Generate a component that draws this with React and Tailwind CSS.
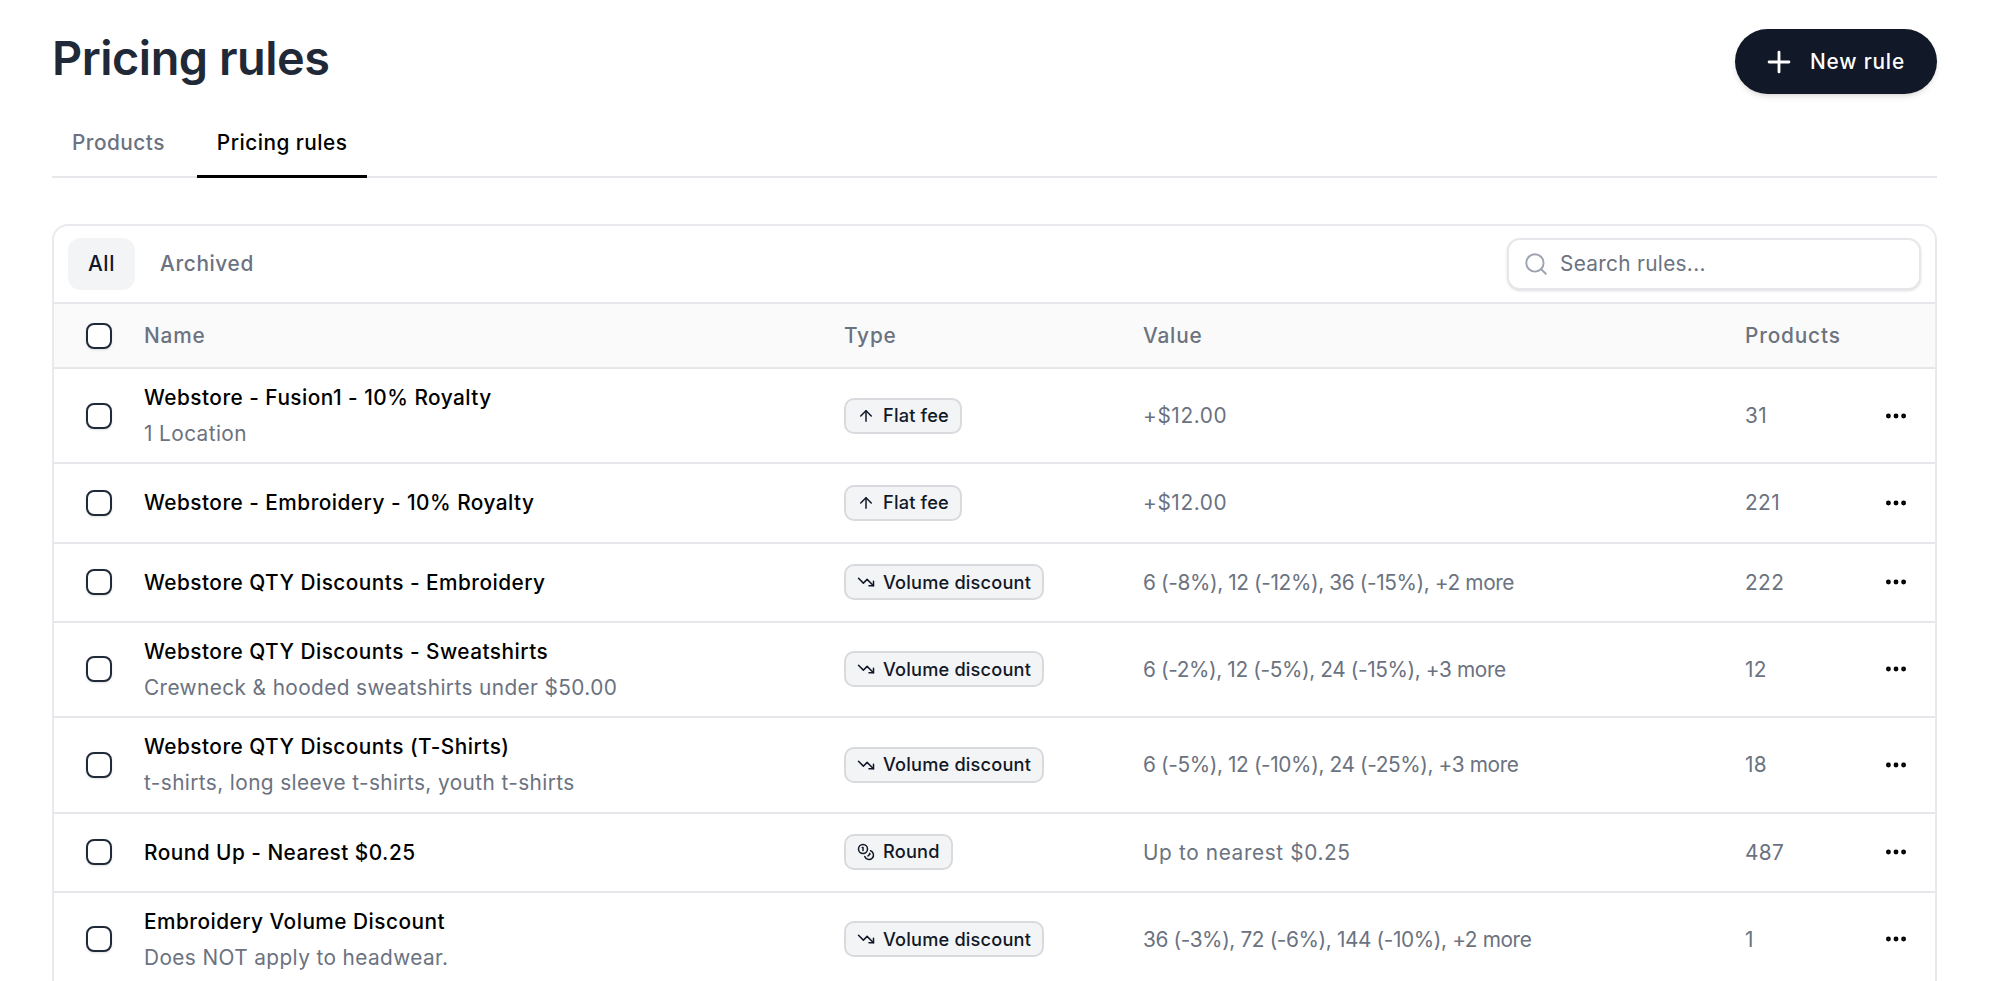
import React from "react";
import { ArrowUp, Coins, Ellipsis, Plus, Search, TrendingDown } from "lucide-react";

const rules = [
  { name: "Webstore - Fusion1 - 10% Royalty", sub: "1 Location", type: "flat", value: "+$12.00", products: "31" },
  { name: "Webstore - Embroidery - 10% Royalty", type: "flat", value: "+$12.00", products: "221" },
  { name: "Webstore QTY Discounts - Embroidery", type: "volume", value: "6 (-8%), 12 (-12%), 36 (-15%), +2 more", products: "222" },
  { name: "Webstore QTY Discounts - Sweatshirts", sub: "Crewneck & hooded sweatshirts under $50.00", type: "volume", value: "6 (-2%), 12 (-5%), 24 (-15%), +3 more", products: "12" },
  { name: "Webstore QTY Discounts (T-Shirts)", sub: "t-shirts, long sleeve t-shirts, youth t-shirts", type: "volume", value: "6 (-5%), 12 (-10%), 24 (-25%), +3 more", products: "18" },
  { name: "Round Up - Nearest $0.25", type: "round", value: "Up to nearest $0.25", products: "487" },
  { name: "Embroidery Volume Discount", sub: "Does NOT apply to headwear.", type: "volume", value: "36 (-3%), 72 (-6%), 144 (-10%), +2 more", products: "1" },
];

const badges = {
  flat: { label: "Flat fee", Icon: ArrowUp },
  volume: { label: "Volume discount", Icon: TrendingDown },
  round: { label: "Round", Icon: Coins },
};

const Checkbox = () => (
  <div className="w-[26px] h-[26px] rounded-[8px] border-2 border-[#1f2937] bg-white shadow-sm" />
);

const Badge = ({ type }) => {
  const { label, Icon } = badges[type];
  return (
    <span className="inline-flex items-center gap-[8px] h-[36px] pl-[11px] pr-[11px] rounded-[10px] border-2 border-[#d8dade] bg-[#f3f4f6] text-[18.2px] tracking-[0.01em] font-medium text-[#111827]">
      <Icon className="w-[18px] h-[18px]" strokeWidth={2} />
      {label}
    </span>
  );
};

export default function App() {
  return (
    <div className="h-[981px] overflow-hidden bg-white pl-[52px] pr-[63px] pt-[29px] tracking-[0.025em] font-['Inter',sans-serif]">
      <div className="flex items-start justify-between">
        <h1 className="text-[46.8px] leading-[58px] font-semibold tracking-[-0.01em] text-[#1f2937]">Pricing rules</h1>
        <button className="flex items-center gap-[14px] h-[65px] pl-[27px] pr-[32px] rounded-full bg-[#111827] text-white text-[20.8px] tracking-[0.04em] font-medium shadow-md">
          <Plus className="w-[34px] h-[34px]" strokeWidth={2} />
          New rule
        </button>
      </div>

      {/* Tabs */}
      <div className="mt-[14px] flex border-b-2 border-[#e5e7eb] h-[70px] tracking-[0.03em]">
        <div className="flex items-center pt-[2px] px-[20px] text-[20.8px] font-medium text-[#6b7280]">Products</div>
        <div className="ml-[12px] flex items-center pt-[2px] px-[20px] h-[70px] border-b-[3px] border-black text-[20.8px] font-medium text-black">Pricing rules</div>
      </div>

      {/* Card */}
      <div className="mt-[46px] rounded-t-[16px] border-2 border-[#e9eaee] border-b-0">
        <div className="flex items-center justify-between h-[78px] pl-[14px] pr-[14px] border-b-2 border-[#e5e7eb]">
          <div className="flex items-center gap-[5px] text-[20.8px] font-medium tracking-[0.03em]">
            <div className="flex items-center h-[52px] px-[20px] rounded-[13px] bg-[#f3f4f6] text-[#111827]">All</div>
            <div className="flex items-center h-[52px] px-[20px] text-[#6b7280]">Archived</div>
          </div>
          <div className="flex items-center gap-[11px] w-[414px] h-[52px] pl-[14px] rounded-[13px] border-2 border-[#e5e7eb] bg-white shadow-sm">
            <Search className="w-[26px] h-[26px] text-[#9ca3af]" strokeWidth={1.75} />
            <span className="text-[20.8px] tracking-[0.015em] text-[#6b7280]">Search rules...</span>
          </div>
        </div>

        <div className="grid grid-cols-[90px_700px_299px_602px_1fr] items-center h-[65px] pt-px bg-[#fafafa] border-b-2 border-[#e5e7eb] text-[20.8px] tracking-[0.04em] font-medium text-[#6b7280]">
          <div className="pl-[32px]"><Checkbox /></div>
          <div>Name</div>
          <div>Type</div>
          <div>Value</div>
          <div>Products</div>
        </div>

        {rules.map((r) => (
          <div
            key={r.name}
            className={`grid grid-cols-[90px_700px_299px_602px_1fr] items-center border-b-2 border-[#e5e7eb] ${r.sub ? "h-[95.4px]" : "h-[79.2px]"}`}
          >
            <div className="pl-[32px]"><Checkbox /></div>
            <div className="pt-px">
              <div className="text-[20.8px] leading-[36px] tracking-[0.023em] font-medium text-black">{r.name}</div>
              {r.sub && <div className="text-[20.8px] leading-[36px] text-[#6b7280]">{r.sub}</div>}
            </div>
            <div><Badge type={r.type} /></div>
            <div className={`text-[20.8px] text-[#6b7280] ${r.value.includes("(") ? "tracking-[-0.018em]" : "tracking-[0.03em]"}`}>{r.value}</div>
            <div className="flex items-center justify-between pr-[26px] text-[20.8px] text-[#6b7280]">
              {r.products}
              <Ellipsis className="w-[26px] h-[26px] text-black" strokeWidth={2.5} />
            </div>
          </div>
        ))}
      </div>
    </div>
  );
}
